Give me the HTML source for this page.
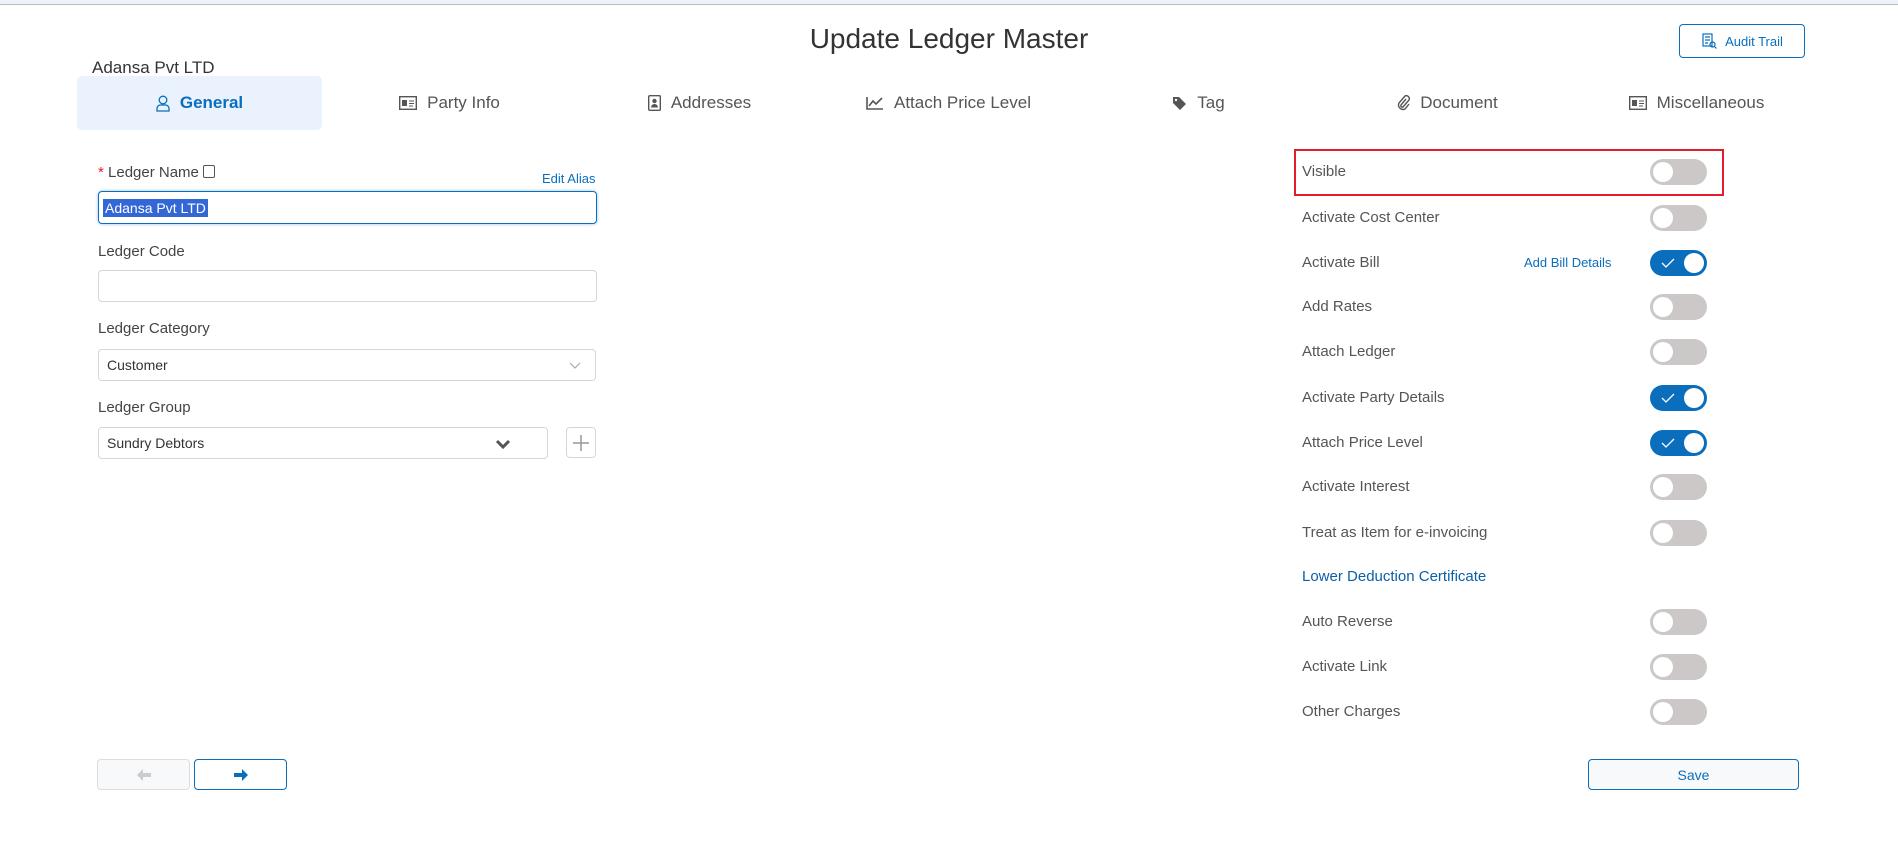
<!DOCTYPE html>
<html><head><meta charset="utf-8"><style>
*{box-sizing:border-box;margin:0;padding:0}
body{width:1898px;height:843px;background:#fff;font-family:"Liberation Sans",sans-serif;color:#555;position:relative;overflow:hidden}
.a{position:absolute}
.topbar{left:0;top:0;width:1898px;height:5px;background:#eef2f8;border-bottom:1px solid #b8bcc4}
.title{left:0;width:1898px;top:23px;text-align:center;font-size:28px;color:#333}
.tab{top:76px;height:54px;width:249px;display:flex;align-items:center;justify-content:center;font-size:17px;color:#555;gap:10px}
.tab.act{background:#eaf2fd;border-radius:5px;color:#0a6ebd;font-weight:bold}
.lbl{font-size:15px;color:#444}
.inp{border:1px solid #d6d6d6;border-radius:4px;height:32px;background:#fff;font-size:14px;color:#333;padding-left:8px;display:flex;align-items:center}
.row{left:1302px;font-size:15px;color:#555;height:26px;line-height:26px}
.tg{left:1650px;width:57px;height:26px;border-radius:13px;background:#cdc8c8}
.tg::after{content:"";position:absolute;left:3px;top:3px;width:20px;height:20px;border-radius:50%;background:#fff}
.tg.on{background:#0a6ebd}
.tg.on::after{left:34px}
.tg.on svg{position:absolute;left:11px;top:8px}
.btn{border:1px solid #0a6ebd;border-radius:4px;background:#f8f9fa;color:#0a6ebd;display:flex;align-items:center;justify-content:center;font-size:14px}
</style></head><body>
<div class="a topbar"></div>
<div class="a title">Update Ledger Master</div>
<div class="a btn" style="left:1679px;top:24px;width:126px;height:34px;font-size:13px;gap:8px;background:#fff">
<svg width="16" height="16" viewBox="0 0 16 16" fill="none" stroke="#0a6ebd" stroke-width="1.2"><rect x="2" y="1" width="9" height="12"/><path d="M4 4h5M4 7h5M4 10h3"/><circle cx="11.5" cy="11.5" r="2.5"/><path d="M13.5 13.5l2 2"/></svg>Audit Trail</div>
<div class="a" style="left:92px;top:58px;font-size:17px;color:#333">Adansa Pvt LTD</div>

<div class="a tab act" style="left:77px;width:245px"><svg width="14" height="17" viewBox="0 0 14 17" fill="none" stroke="#0a6ebd" stroke-width="1.3"><circle cx="7" cy="5" r="3.8"/><path d="M1 16v-2.5a3.5 3.5 0 0 1 3.5-3.5h5A3.5 3.5 0 0 1 13 13.5V16z"/></svg>General</div>
<div class="a tab" style="left:325px"><svg width="18" height="14" viewBox="0 0 18 14"><rect x=".7" y=".7" width="16.6" height="12.6" fill="none" stroke="#555" stroke-width="1.4"/><rect x="3" y="4" width="5" height="6" fill="#555"/><path d="M10 5h5M10 7.5h5M10 10h4" stroke="#555"/></svg>Party Info</div>
<div class="a tab" style="left:575px"><svg width="13" height="16" viewBox="0 0 13 16"><rect x=".7" y=".7" width="11.6" height="14.6" rx="1" fill="none" stroke="#555" stroke-width="1.4"/><circle cx="6.5" cy="6" r="2.2" fill="#555"/><path d="M3 12.5a3.5 3.5 0 0 1 7 0z" fill="#555"/></svg>Addresses</div>
<div class="a tab" style="left:824px"><svg width="18" height="14" viewBox="0 0 18 14" fill="none" stroke="#555" stroke-width="1.6"><path d="M1 1v12h16"/><path d="M3 10l4-5 3 3 6-6"/></svg>Attach Price Level</div>
<div class="a tab" style="left:1074px"><svg width="15" height="15" viewBox="0 0 15 15"><path d="M1 1h6l7 7-6 6-7-7z" fill="#555"/><circle cx="4" cy="4" r="1.2" fill="#fff"/></svg>Tag</div>
<div class="a tab" style="left:1323px"><svg width="13" height="16" viewBox="0 0 13 16" fill="none" stroke="#555" stroke-width="1.4"><path d="M9 4l-5 6a1.5 1.5 0 0 0 2 2l6-7a3 3 0 0 0-4-4L2 8a4.5 4.5 0 0 0 6 6l4-5"/></svg>Document</div>
<div class="a tab" style="left:1572px"><svg width="18" height="14" viewBox="0 0 18 14"><rect x=".7" y=".7" width="16.6" height="12.6" fill="none" stroke="#555" stroke-width="1.4"/><rect x="3" y="4" width="5" height="6" fill="#555"/><path d="M10 5h5M10 7.5h5M10 10h4" stroke="#555"/></svg>Miscellaneous</div>

<div class="a lbl" style="left:98px;top:164px"><span style="color:#e21c2c">*</span> Ledger Name <span style="display:inline-block;width:12px;height:13px;border:1px solid #555;border-radius:2px;vertical-align:-1px"></span></div>
<div class="a" style="left:542px;top:171px;font-size:13px;color:#0a6ebd">Edit Alias</div>
<div class="a inp" style="left:98px;top:191px;width:499px;height:33px;border:1px solid #0a6ebd;box-shadow:0 0 3px #8cbde8;padding-left:4px"><span style="background:#3367d6;color:#fff;padding:1px 2px">Adansa Pvt LTD</span></div>
<div class="a lbl" style="left:98px;top:243px">Ledger Code</div>
<div class="a inp" style="left:98px;top:270px;width:499px"></div>
<div class="a lbl" style="left:98px;top:320px">Ledger Category</div>
<div class="a inp" style="left:98px;top:349px;width:498px">Customer<svg class="a" style="right:14px;top:12px" width="12" height="8" viewBox="0 0 12 8" fill="none" stroke="#aaa" stroke-width="1.2"><path d="M1 1l5 5 5-5"/></svg></div>
<div class="a lbl" style="left:98px;top:399px">Ledger Group</div>
<div class="a inp" style="left:98px;top:427px;width:450px">Sundry Debtors<svg class="a" style="right:36px;top:11px" width="16" height="11" viewBox="0 0 16 11" fill="none" stroke="#555" stroke-width="3"><path d="M2 2l6 6 6-6"/></svg></div>
<div class="a inp" style="left:566px;top:427px;width:30px;height:31px;padding:0;justify-content:center"><svg width="18" height="18" viewBox="0 0 18 18" stroke="#999" stroke-width="1.5"><path d="M9 1v16M1 9h16"/></svg></div>

<div class="a" style="left:1294px;top:149px;width:430px;height:47px;border:2px solid #e21c2c"></div>
<div class="a row" style="top:159px">Visible</div><div class="a tg" style="top:159px"></div>
<div class="a row" style="top:205px">Activate Cost Center</div><div class="a tg" style="top:205px"></div>
<div class="a row" style="top:250px">Activate Bill</div><div class="a" style="left:1524px;top:250px;line-height:26px;font-size:13px;color:#0a6ebd">Add Bill Details</div><div class="a tg on" style="top:250px"><svg width="14" height="10" viewBox="0 0 14 10" fill="none" stroke="#fff" stroke-width="1.3"><path d="M1 5l4 4 8-8"/></svg></div>
<div class="a row" style="top:294px">Add Rates</div><div class="a tg" style="top:294px"></div>
<div class="a row" style="top:339px">Attach Ledger</div><div class="a tg" style="top:339px"></div>
<div class="a row" style="top:385px">Activate Party Details</div><div class="a tg on" style="top:385px"><svg width="14" height="10" viewBox="0 0 14 10" fill="none" stroke="#fff" stroke-width="1.3"><path d="M1 5l4 4 8-8"/></svg></div>
<div class="a row" style="top:430px">Attach Price Level</div><div class="a tg on" style="top:430px"><svg width="14" height="10" viewBox="0 0 14 10" fill="none" stroke="#fff" stroke-width="1.3"><path d="M1 5l4 4 8-8"/></svg></div>
<div class="a row" style="top:474px">Activate Interest</div><div class="a tg" style="top:474px"></div>
<div class="a row" style="top:520px">Treat as Item for e-invoicing</div><div class="a tg" style="top:520px"></div>
<div class="a row" style="top:564px;color:#0a5fa8">Lower Deduction Certificate</div>
<div class="a row" style="top:609px">Auto Reverse</div><div class="a tg" style="top:609px"></div>
<div class="a row" style="top:654px">Activate Link</div><div class="a tg" style="top:654px"></div>
<div class="a row" style="top:699px">Other Charges</div><div class="a tg" style="top:699px"></div>

<div class="a btn" style="left:97px;top:759px;width:93px;height:31px;border-color:#ddd"><svg width="14" height="14" viewBox="0 0 14 14" fill="#ccc"><path d="M14 5H6V1L0 7l6 6V9h8z"/></svg></div>
<div class="a btn" style="left:194px;top:759px;width:93px;height:31px;background:#fff"><svg width="14" height="14" viewBox="0 0 14 14" fill="#0a6ebd"><path d="M0 5h8V1l6 6-6 6V9H0z"/></svg></div>
<div class="a btn" style="left:1588px;top:759px;width:211px;height:31px">Save</div>
</body></html>
